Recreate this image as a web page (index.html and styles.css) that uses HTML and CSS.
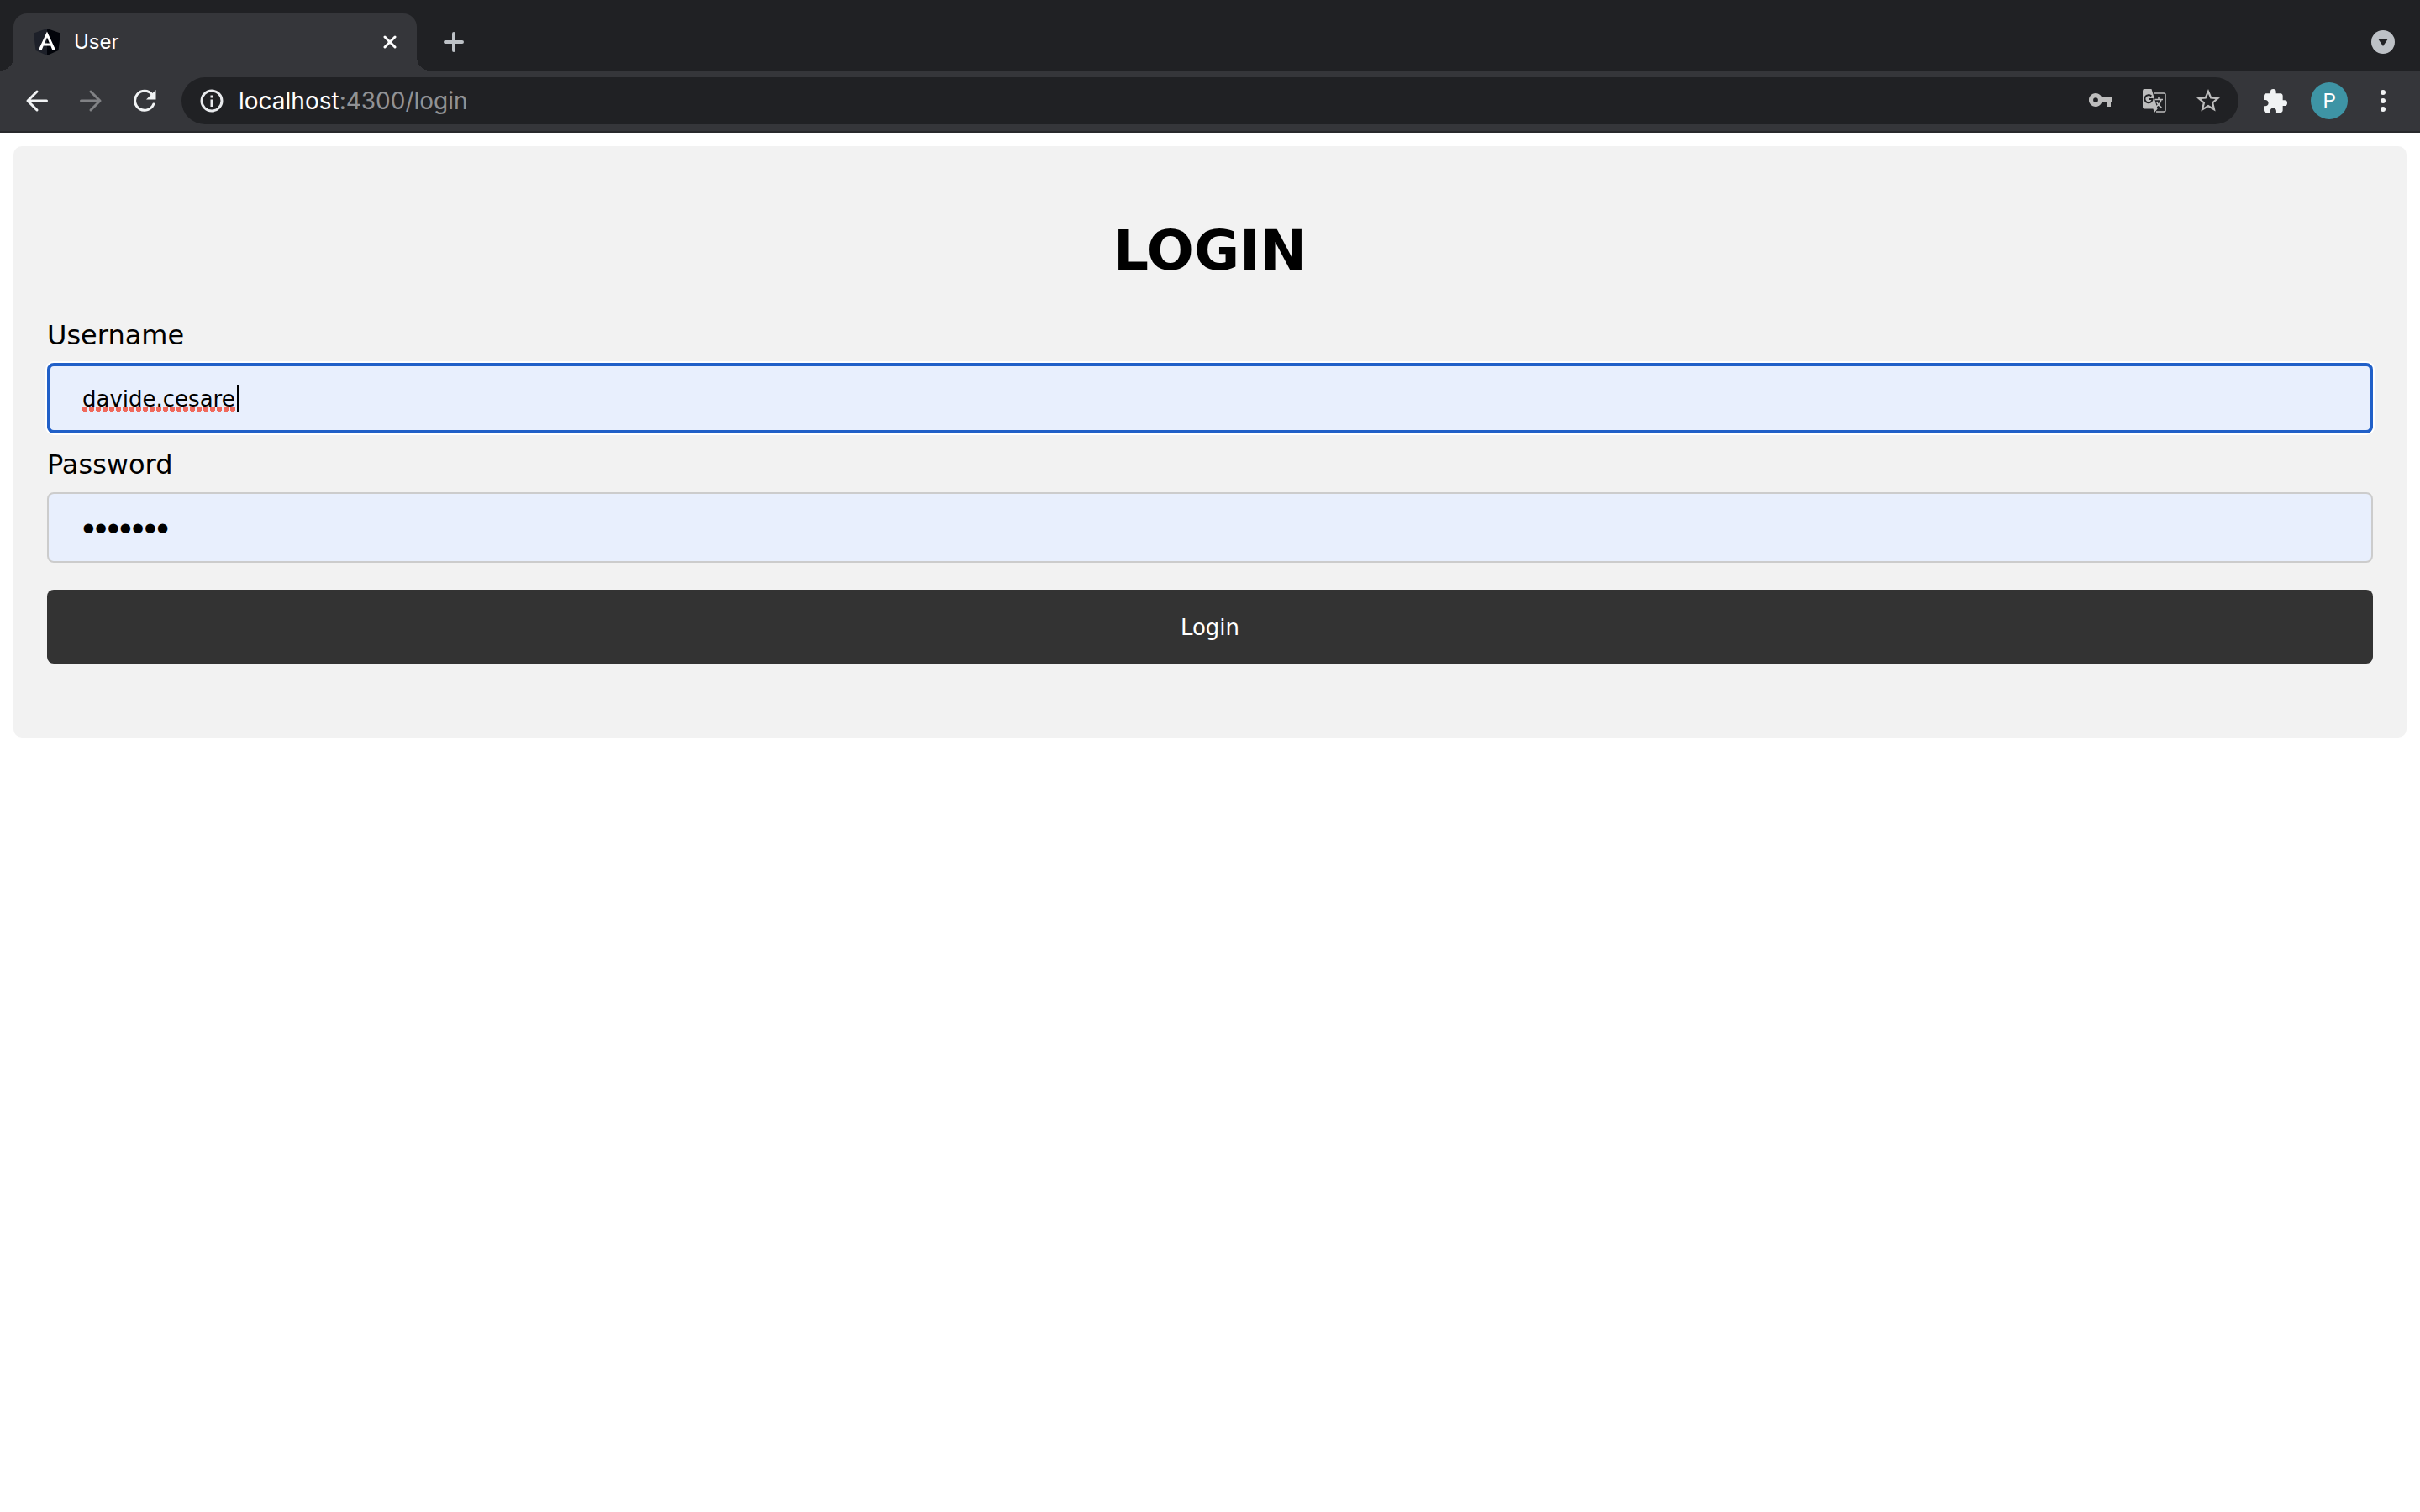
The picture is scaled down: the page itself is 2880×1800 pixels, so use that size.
FILE: index.html
```html
<!DOCTYPE html>
<html lang="en">
<head>
<meta charset="utf-8">
<title>User</title>
<link rel="stylesheet" href="styles.css">
</head>
<body>
<header class="browser">
  <div class="tab-strip">
    <div class="tab">
      <svg class="favicon" viewBox="0 0 32 32" aria-hidden="true">
        <path fill="#1d2029" d="M16 0 0 5.500 2.500 26 16 32z"/>
        <path fill="#02040a" d="M16 0 32 5.500 29.500 26 16 32z"/>
        <path fill="#fff" fill-rule="evenodd" d="M16 3.500 5.800 25.500h3.900l2-5h8.600l2 5h3.900zM16 10.500l3 6.900h-6z"/>
      </svg>
      <span class="tab-title">User</span>
      <button class="icon-button" type="button" aria-label="Close tab">
        <svg width="16" height="16" viewBox="0 0 16 16" fill="none" stroke="#fff" stroke-width="3" stroke-linecap="round"><path d="M2 2l12 12M14 2 2 14"/></svg>
      </button>
    </div>
    <button class="icon-button new-tab" type="button" aria-label="New tab">
      <svg width="24" height="24" viewBox="0 0 24 24" fill="none" stroke="#bdc1c6" stroke-width="4" stroke-linecap="round"><path d="M12 2v20M2 12h20"/></svg>
    </button>
    <button class="icon-button tab-search" type="button" aria-label="Search tabs">
      <svg width="28" height="28" viewBox="0 0 28 28"><circle cx="14" cy="14" r="14" fill="#bdc1c6"/><path fill="#202124" d="M8 10h12l-6 9z"/></svg>
    </button>
  </div>
  <nav class="toolbar" aria-label="Browser toolbar">
    <div class="navigation">
      <button class="icon-button" type="button" aria-label="Back">
        <svg width="28" height="28" viewBox="0 0 28 28" fill="none" stroke="#f1f3f4" stroke-width="3" stroke-linecap="round" stroke-linejoin="round"><path d="M25.500 14H3M14 3 3 14l11 11"/></svg>
      </button>
      <button class="icon-button" type="button" aria-label="Forward">
        <svg width="28" height="28" viewBox="0 0 28 28" fill="none" stroke="#818285" stroke-width="3" stroke-linecap="round" stroke-linejoin="round"><path d="M2.500 14H25M14 3l11 11-11 11"/></svg>
      </button>
      <button class="icon-button" type="button" aria-label="Reload">
        <svg width="28" height="28" viewBox="0 0 28 28"><path d="M24.800 18A11.500 11.500 0 1 1 23 6.500" fill="none" stroke="#f1f3f4" stroke-width="3" stroke-linecap="round"/><path fill="#f1f3f4" d="M27.500 1v11.500H16z"/></svg>
      </button>
    </div>
    <div class="address-bar">
      <button class="icon-button" type="button" aria-label="Site information">
        <svg width="28" height="28" viewBox="0 0 28 28"><circle cx="14" cy="14" r="12" fill="none" stroke="#e8eaed" stroke-width="3"/><path fill="#e8eaed" d="M12.500 7.500h3v3h-3zM12.500 12.500h3v8.500h-3z"/></svg>
      </button>
      <div class="address" role="textbox" contenteditable="true" spellcheck="false" aria-label="Address"><span class="address-host">localhost</span>:4300/login</div>
      <button class="icon-button" type="button" aria-label="Saved passwords">
        <svg width="28" height="28" viewBox="0 0 28 28"><path fill="#bdbdbd" fill-rule="evenodd" d="M15.300 10A8 8 0 1 0 15.300 16H22v5h4v-5h2v-6zM8 10.200a2.900 2.900 0 1 1 0 5.800 2.900 2.900 0 0 1 0-5.800z"/></svg>
      </button>
      <button class="icon-button" type="button" aria-label="Translate this page">
        <svg width="28" height="28" viewBox="0 0 28 28"><path d="M13 5h12a2 2 0 0 1 2 2v18a2 2 0 0 1-2 2h-9" fill="none" stroke="#bdbdbd" stroke-width="1.500"/><path fill="#bdbdbd" d="M2 0h8.500l7.100 23.500L14 28l-1.600-4.500H2a2 2 0 0 1-2-2V2a2 2 0 0 1 2-2z"/><path d="M10.300 8.500A4.600 4.600 0 1 0 11.600 12H7.500" fill="none" stroke="#202124" stroke-width="2"/><path d="M14.500 12.500H24M19 10v2.500M22 12.500c-.8 4-3 6.500-6 8.500M16.500 15c1 3 3 5 6 7" fill="none" stroke="#bdbdbd" stroke-width="1.500"/></svg>
      </button>
      <button class="icon-button" type="button" aria-label="Bookmark this page">
        <svg width="28" height="28" viewBox="2 2 20 20"><path fill="#bdbdbd" d="M22 9.240l-7.190-.62L12 2 9.190 8.630 2 9.240l5.460 4.730L5.820 21 12 17.270 18.180 21l-1.630-7.030L22 9.240zM12 15.400l-3.760 2.270 1-4.280-3.320-2.880 4.380-.38L12 6.100l1.710 4.040 4.380.38-3.320 2.880 1 4.280L12 15.400z"/></svg>
      </button>
    </div>
    <div class="tools">
      <button class="icon-button" type="button" aria-label="Extensions">
        <svg width="28" height="28" viewBox="2 1 21 21"><path fill="#f1f3f4" d="M20.500 11H19V7c0-1.100-.9-2-2-2h-4V3.500a2.500 2.500 0 0 0-5 0V5H4c-1.100 0-1.990.9-1.990 2v3.800H3.500c1.490 0 2.700 1.210 2.700 2.700s-1.210 2.700-2.700 2.700H2V20c0 1.100.9 2 2 2h3.800v-1.500c0-1.490 1.210-2.700 2.700-2.700s2.700 1.210 2.700 2.700V22H17c1.100 0 2-.9 2-2v-4h1.500a2.500 2.500 0 0 0 0-5z"/></svg>
      </button>
      <button class="avatar" type="button" aria-label="Profile P">P</button>
      <button class="icon-button" type="button" aria-label="Menu">
        <svg width="28" height="28" viewBox="0 0 28 28" fill="#f1f3f4"><circle cx="14" cy="4" r="3"/><circle cx="14" cy="14" r="3"/><circle cx="14" cy="24" r="3"/></svg>
      </button>
    </div>
  </nav>
</header>
<main class="page">
  <form class="login-card">
    <h1 class="login-title">LOGIN</h1>
    <label class="field-label" for="username">Username</label>
    <div class="field">
      <input class="field-input field-input-active" id="username" type="text" value="davide.cesare" spellcheck="false">
      <span class="spelling-mark" aria-hidden="true"></span>
    </div>
    <label class="field-label" for="password">Password</label>
    <div class="field">
      <input class="field-input field-input-password" id="password" type="password" value="1234567">
    </div>
    <button class="submit" type="button">Login</button>
  </form>
</main>
</body>
</html>
```
FILE: styles.css
```css
*,
*::before,
*::after {
  box-sizing: border-box;
}

body {
  margin: 0;
  background: #fff;
  color: #000;
  font-family: Verdana, "DejaVu Sans", sans-serif;
}

button {
  margin: 0;
  padding: 0;
  border: 0;
  background: none;
  cursor: pointer;
}

/* Browser frame */
.browser {
  background: #202124;
  font-family: Inter, sans-serif;
}

.tab-strip {
  display: flex;
  align-items: center;
  height: 84px;
  padding: 16px 30px 0 16px;
}

.tab {
  position: relative;
  display: flex;
  align-items: center;
  gap: 16px;
  width: 480px;
  height: 68px;
  padding: 0 24px;
  border-radius: 16px 16px 0 0;
  background: #35363a;
}

.tab::before,
.tab::after {
  content: "";
  position: absolute;
  bottom: 0;
  width: 16px;
  height: 16px;
}

.tab::before {
  right: 100%;
  background: radial-gradient(circle at 0 0, #202124 16px, #35363a 16px);
}

.tab::after {
  left: 100%;
  background: radial-gradient(circle at 100% 0, #202124 16px, #35363a 16px);
}

.favicon {
  width: 32px;
  height: 32px;
}

.tab-title {
  flex: 1;
  color: #fff;
  font-size: 24px;
  line-height: 32px;
}

.icon-button {
  display: flex;
  align-items: center;
  justify-content: center;
  flex: none;
}

.new-tab {
  margin-left: 32px;
}

.tab-search {
  margin-left: auto;
}

.toolbar {
  display: flex;
  align-items: center;
  height: 74px;
  padding: 0 30px;
  border-bottom: 2px solid #28292c;
  background: #35363a;
}

.navigation {
  display: flex;
  gap: 36px;
}

.address-bar {
  display: flex;
  flex: 1;
  align-items: center;
  gap: 36px;
  height: 56px;
  margin: 0 30px;
  padding: 0 22px;
  border-radius: 28px;
  background: #202124;
}

.address {
  flex: 1;
  margin-left: -18px;
  color: #919295;
  font-size: 28px;
  line-height: 40px;
}

.address-host {
  color: #fff;
}

.tools {
  display: flex;
  align-items: center;
  gap: 28px;
}

.avatar {
  width: 44px;
  height: 44px;
  border-radius: 50%;
  background: #3e94a5;
  color: #fff;
  font-family: Roboto, sans-serif;
  font-size: 24px;
  line-height: 44px;
}

/* Login form */
.page {
  padding: 16px;
}

.login-card {
  display: flex;
  flex-direction: column;
  padding: 86px 40px 88px;
  border-radius: 10px;
  background: #f2f2f2;
}

.login-title {
  margin: 0 0 40px;
  font-size: 66px;
  line-height: 78px;
  text-align: center;
}

.field-label {
  font-size: 32px;
  line-height: 42px;
}

.field {
  position: relative;
  margin: 12px 0 16px;
}

.field-input {
  display: block;
  width: 100%;
  height: 84px;
  padding: 2px 40px 0;
  border: 2px solid #ccc;
  border-radius: 8px;
  outline: 0;
  background: #e8effd;
  color: #000;
  font-family: inherit;
  font-size: 26px;
}

.field-input-active {
  padding: 2px 38px 0;
  border: 4px solid #2160c8;
  box-shadow: 0 0 0 2px #fff;
}

.field-input-password {
  font-family: "Liberation Sans", sans-serif;
  font-size: 42px;
}

/* Dotted spelling underline, ended by the text caret */
.spelling-mark {
  position: absolute;
  top: 26px;
  left: 41px;
  width: 187px;
  height: 32px;
  border-right: 2px solid #000;
  background: radial-gradient(circle, #f0695c 3px, transparent 3px) 0 100% / 8px 6px repeat-x;
  pointer-events: none;
}

.submit {
  height: 88px;
  margin-top: 16px;
  padding-top: 2px;
  border-radius: 8px;
  background: #333;
  color: #fff;
  font-family: inherit;
  font-size: 26px;
}
```
